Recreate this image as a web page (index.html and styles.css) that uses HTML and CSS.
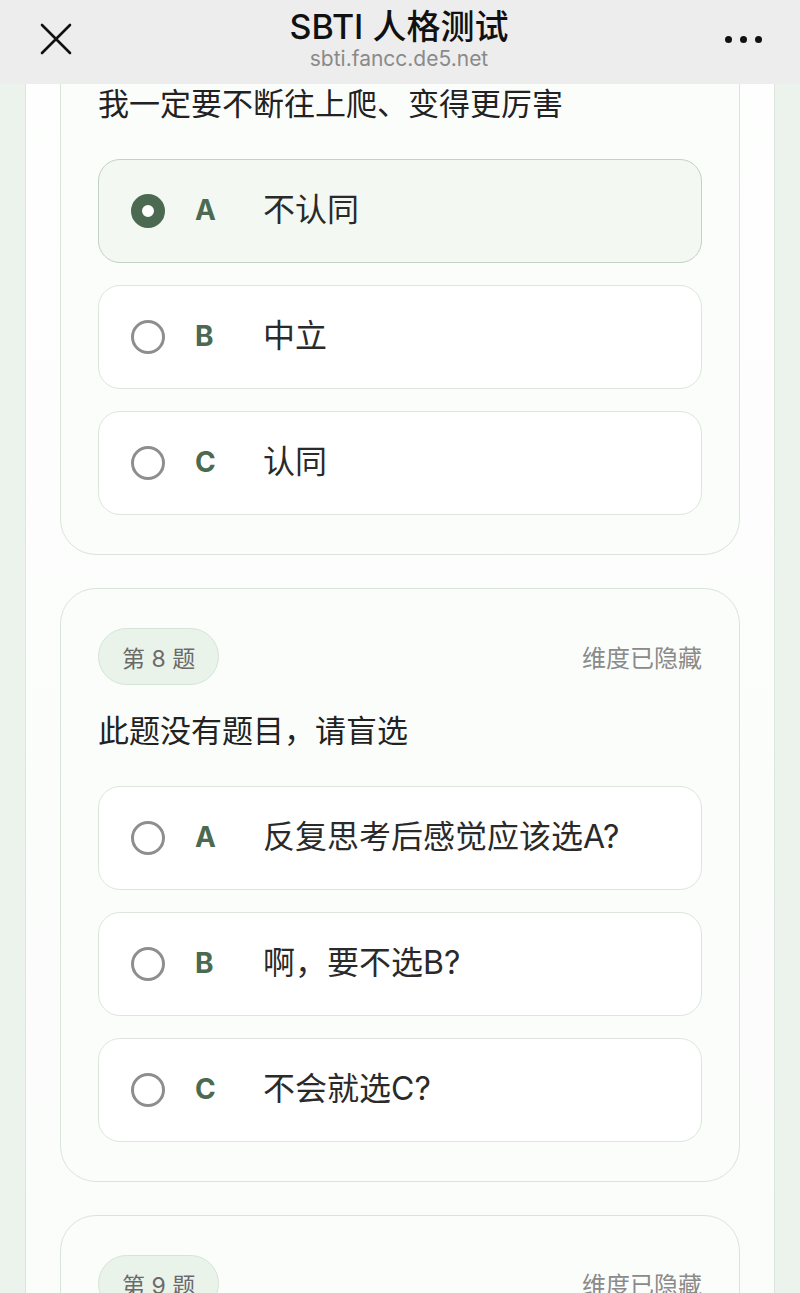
FILE: index.html
```html
<!DOCTYPE html>
<html>
<head>
  <title>SBTI 人格测试</title>
  <meta http-equiv="content-type" content="text/html; charset=utf-8" />
  <link rel="stylesheet" href="styles.css">
</head>
<body>
  <div class="topbar">
    <svg class="close" width="34" height="34" viewBox="0 0 34 34">
      <path d="M3 3 L31 31 M31 3 L3 31" stroke="#111" stroke-width="2.6" stroke-linecap="round" fill="none" />
    </svg>
    <div class="titles">
      <div class="title">SBTI 人格测试</div>
      <div class="url">sbti.fancc.de5.net</div>
    </div>
    <div class="more"><span></span><span></span><span></span></div>
  </div>

  <div class="column">
    <div class="card first">
      <div class="card-head">
        <span class="badge">第 7 题</span>
        <span class="hidden-dim">维度已隐藏</span>
      </div>
      <p class="question">我一定要不断往上爬、变得更厉害</p>
      <div class="option selected"><span class="radio"></span><span class="letter">A</span><span class="text">不认同</span></div>
      <div class="option"><span class="radio"></span><span class="letter">B</span><span class="text">中立</span></div>
      <div class="option"><span class="radio"></span><span class="letter">C</span><span class="text">认同</span></div>
    </div>

    <div class="card">
      <div class="card-head">
        <span class="badge">第 8 题</span>
        <span class="hidden-dim">维度已隐藏</span>
      </div>
      <p class="question">此题没有题目，请盲选</p>
      <div class="option"><span class="radio"></span><span class="letter">A</span><span class="text">反复思考后感觉应该选A?</span></div>
      <div class="option"><span class="radio"></span><span class="letter">B</span><span class="text">啊，要不选B?</span></div>
      <div class="option"><span class="radio"></span><span class="letter">C</span><span class="text">不会就选C?</span></div>
    </div>

    <div class="card">
      <div class="card-head">
        <span class="badge">第 9 题</span>
        <span class="hidden-dim">维度已隐藏</span>
      </div>
      <p class="question">我常常想很多，但说出来的很少</p>
      <div class="option"><span class="radio"></span><span class="letter">A</span><span class="text">不认同</span></div>
    </div>
  </div>
</body>
</html>
```

FILE: styles.css
```css
html, body {
  margin: 0;
  padding: 0;
}
body {
  background: #ecf2ec;
  font-family: "Inter", "Noto Sans CJK SC", sans-serif;
  color: #222;
  height: 1293px;
  overflow: hidden;
}
.topbar {
  position: fixed;
  top: 0;
  left: 0;
  right: 0;
  height: 84px;
  background: #ededed;
  z-index: 10;
  display: flex;
  align-items: center;
  justify-content: space-between;
  padding: 0 38px 0 39px;
  box-sizing: border-box;
}
.close {
  margin-top: -6px;
}
.titles {
  text-align: center;
  margin-top: -6px;
}
.title {
  font-size: 34px;
  font-weight: 500;
  color: #111;
  line-height: 40px;
}
.url {
  font-size: 21px;
  color: #8a8a8a;
  line-height: 24px;
}
.more {
  display: flex;
  gap: 8px;
  margin-top: -6px;
}
.more span {
  width: 7px;
  height: 7px;
  border-radius: 50%;
  background: #111;
}
.column {
  margin: 0 25px;
  min-height: 1293px;
  background: linear-gradient(#fdfefd, #fafcfa);
  border-left: 1px solid #dce6dc;
  border-right: 1px solid #dce6dc;
  padding: 0 34px;
  overflow: hidden;
}
.card {
  border: 1.5px solid #dbe4db;
  border-radius: 36px;
  background: #fbfdfb;
  padding: 39px 37px 39px;
  margin-bottom: 33px;
}
.card.first {
  margin-top: -39px;
}
.card-head {
  display: flex;
  justify-content: space-between;
  align-items: center;
  height: 57px;
}
.badge {
  display: inline-flex;
  align-items: center;
  height: 57px;
  padding: 0 23px;
  box-sizing: border-box;
  border-radius: 29px;
  background: #eaf3ea;
  border: 1.5px solid #d6e4d6;
  color: #6a6a6a;
  font-size: 23px;
}
.hidden-dim {
  color: #8a8a8a;
  font-size: 24px;
}
.question {
  margin: 23px 0 32px;
  font-size: 31px;
  line-height: 46px;
  color: #222;
}
.option {
  display: flex;
  align-items: center;
  height: 104px;
  box-sizing: border-box;
  border: 1.5px solid #dde5dd;
  border-radius: 22px;
  background: #fff;
  padding-left: 32px;
  margin-bottom: 22px;
}
.option:last-child {
  margin-bottom: 0;
}
.option.selected {
  background: #f3f8f3;
  border-color: #c2d2c4;
}
.radio {
  width: 34px;
  height: 34px;
  box-sizing: border-box;
  border-radius: 50%;
  border: 3px solid #8e8e8e;
  margin-right: 30px;
  flex-shrink: 0;
}
.selected .radio {
  border: 11px solid #4b6a51;
  background: #fff;
}
.letter {
  width: 68px;
  font-weight: 700;
  font-size: 28px;
  line-height: 1;
  padding-bottom: 2px;
  color: #4b6a51;
}
.text {
  font-size: 32px;
  line-height: 1;
  padding-bottom: 3px;
  color: #2a2a2a;
}
```
